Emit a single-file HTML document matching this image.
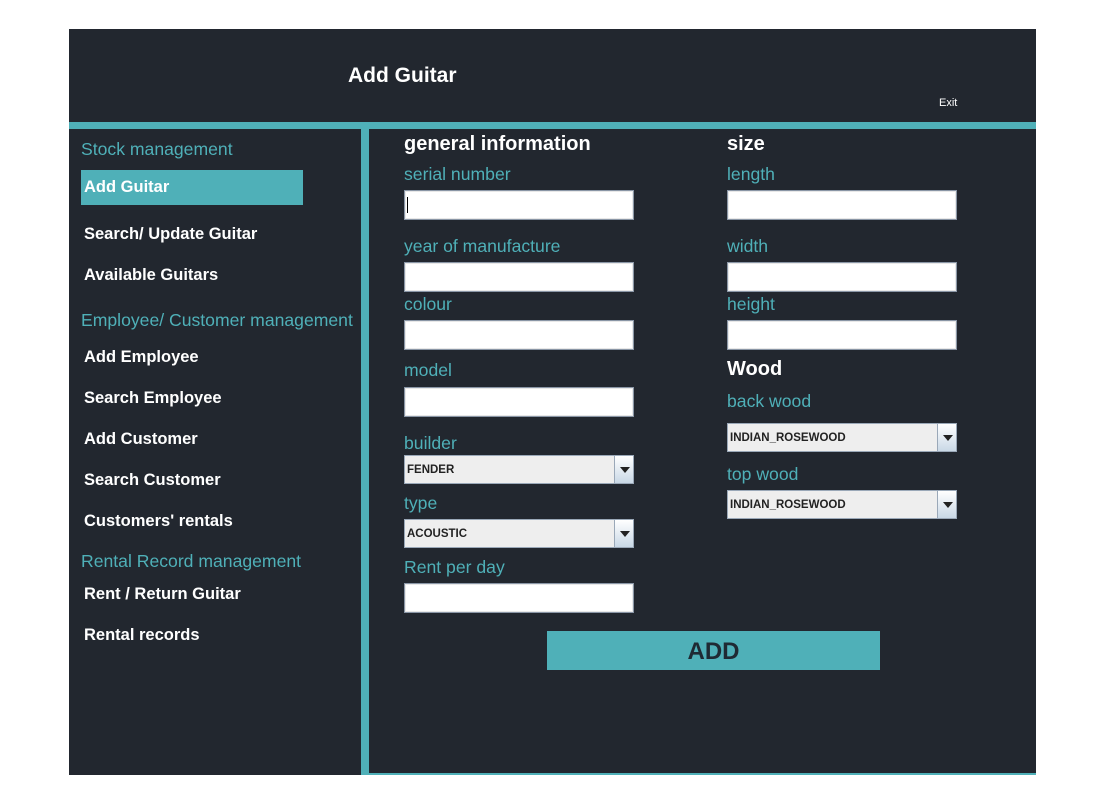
<!DOCTYPE html>
<html><head><style>
*{margin:0;padding:0;box-sizing:border-box}
body{width:1097px;height:807px;background:#fff;position:relative;font-family:"Liberation Sans",sans-serif;overflow:hidden}
.a{position:absolute;white-space:nowrap}
.bg{background:#22272f}
.t{color:#4fb0b8;font-size:17.6px}
.w{color:#fff;font-weight:bold;font-size:16.5px}
.h{color:#fff;font-weight:bold;font-size:20px}
.in{position:absolute;width:230px;height:30px;background:#fff;border:1px solid #8a96a6;box-shadow:inset 0 0 0 1px #e8e8e8}
.cb{position:absolute;width:230px;height:29px;background:#eeeeee;border:1px solid #9aa8b8;font-size:11.5px;font-weight:bold;color:#222;padding:8px 0 0 2px}
.cb b{position:absolute;right:0;top:0;width:19px;height:27px;background:linear-gradient(#fff,#c9d8e6);border-left:1px solid #9aa8b8}
.cb b:after{content:"";position:absolute;left:5px;top:11px;border-left:5px solid transparent;border-right:5px solid transparent;border-top:6px solid #222}
</style></head><body>
<div class="a bg" style="left:69px;top:29px;width:967px;height:746px"></div>
<div class="a" style="left:348px;top:64px;color:#fff;font-weight:bold;font-size:21px">Add Guitar</div>
<div class="a" style="left:939px;top:97px;color:#fff;font-size:11px">Exit</div>
<div class="a" style="left:69px;top:122px;width:967px;height:7px;background:#4fb0b8"></div>
<div class="a" style="left:361px;top:129px;width:8px;height:646px;background:#4fb0b8"></div>
<div class="a" style="left:369px;top:773px;width:667px;height:2px;background:#4fb0b8"></div>

<div class="a t" style="left:81px;top:139px">Stock management</div>
<div class="a" style="left:81px;top:170px;width:222px;height:35px;background:#4fb0b8"></div>
<div class="a w" style="left:84px;top:178px">Add Guitar</div>
<div class="a w" style="left:84px;top:225px">Search/ Update Guitar</div>
<div class="a w" style="left:84px;top:266px">Available Guitars</div>
<div class="a t" style="left:81px;top:310px">Employee/ Customer management</div>
<div class="a w" style="left:84px;top:348px">Add Employee</div>
<div class="a w" style="left:84px;top:389px">Search Employee</div>
<div class="a w" style="left:84px;top:430px">Add Customer</div>
<div class="a w" style="left:84px;top:471px">Search Customer</div>
<div class="a w" style="left:84px;top:512px">Customers' rentals</div>
<div class="a t" style="left:81px;top:551px">Rental Record management</div>
<div class="a w" style="left:84px;top:585px">Rent / Return Guitar</div>
<div class="a w" style="left:84px;top:626px">Rental records</div>

<div class="a h" style="left:404px;top:133px">general information</div>
<div class="a t" style="left:404px;top:164px">serial number</div>
<div class="in" style="left:404px;top:190px"><div style="position:absolute;left:2px;top:6px;width:1px;height:16px;background:#000"></div></div>
<div class="a t" style="left:404px;top:236px">year of manufacture</div>
<div class="in" style="left:404px;top:262px"></div>
<div class="a t" style="left:404px;top:294px">colour</div>
<div class="in" style="left:404px;top:320px"></div>
<div class="a t" style="left:404px;top:360px">model</div>
<div class="in" style="left:404px;top:387px"></div>
<div class="a t" style="left:404px;top:433px">builder</div>
<div class="cb" style="left:404px;top:455px">FENDER<b></b></div>
<div class="a t" style="left:404px;top:493px">type</div>
<div class="cb" style="left:404px;top:519px">ACOUSTIC<b></b></div>
<div class="a t" style="left:404px;top:557px">Rent per day</div>
<div class="in" style="left:404px;top:583px"></div>

<div class="a h" style="left:727px;top:133px">size</div>
<div class="a t" style="left:727px;top:164px">length</div>
<div class="in" style="left:727px;top:190px"></div>
<div class="a t" style="left:727px;top:236px">width</div>
<div class="in" style="left:727px;top:262px"></div>
<div class="a t" style="left:727px;top:294px">height</div>
<div class="in" style="left:727px;top:320px"></div>
<div class="a h" style="left:727px;top:358px">Wood</div>
<div class="a t" style="left:727px;top:391px">back wood</div>
<div class="cb" style="left:727px;top:423px">INDIAN_ROSEWOOD<b></b></div>
<div class="a t" style="left:727px;top:464px">top wood</div>
<div class="cb" style="left:727px;top:490px">INDIAN_ROSEWOOD<b></b></div>

<div class="a" style="left:547px;top:631px;width:333px;height:39px;background:#4fb0b8;color:#1f2a33;font-weight:bold;font-size:24px;text-align:center;line-height:41px">ADD</div>
</body></html>
